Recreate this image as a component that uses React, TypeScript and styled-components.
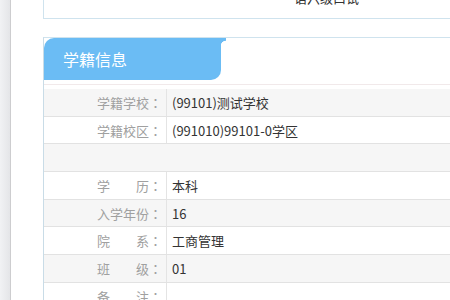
import React from 'react';
import styled, { createGlobalStyle } from 'styled-components';

const GlobalStyle = createGlobalStyle`
    html, body {
        margin: 0;
        padding: 0;
        background: #fff;
        overflow: hidden;
    }
    body {
        font-family: "Noto Sans CJK SC", "Noto Sans", sans-serif;
        font-size: 13px;
    }
`;

type Row = { label: string; value?: string; blank?: boolean };

const rows: Row[] = [
    { label: '学籍学校', value: '(99101)测试学校' },
    { label: '学籍校区', value: '(991010)99101-0学区' },
    { label: '', blank: true },
    { label: '学　　历', value: '本科' },
    { label: '入学年份', value: '16' },
    { label: '院　　系', value: '工商管理' },
    { label: '班　　级', value: '01' },
    { label: '备　　注', value: '' },
];

const App: React.FC = () => {
    return (
        <>
            <GlobalStyle />
            <Page>
                <SideStrip />
                <Main>
                    <TopPanel>
                        <TopTitle>语六级口试</TopTitle>
                    </TopPanel>
                    <InfoPanel>
                        <TabRow>
                            <Tab>学籍信息</Tab>
                        </TabRow>
                        <Body>
                            {rows.map((row, i) => (
                                <InfoRow key={i} striped={i % 2 === 0}>
                                    {row.blank ? (
                                        <BlankCell />
                                    ) : (
                                        <>
                                            <LabelCell>
                                                {row.label}
                                                <Colon>：</Colon>
                                            </LabelCell>
                                            <ValueCell>{row.value}</ValueCell>
                                        </>
                                    )}
                                </InfoRow>
                            ))}
                        </Body>
                    </InfoPanel>
                </Main>
            </Page>
        </>
    );
};

const TAB_BLUE = '#6bbcf4';
const PANEL_BORDER = '#cfe3ee';

const Page = styled.div`
    display: flex;
    width: 450px;
    height: 300px;
    overflow: hidden;
`;

const SideStrip = styled.div`
    flex: 0 0 10px;
    background: linear-gradient(to right, #f1f2f4, #e4e5e8);
    border-right: 1px solid #cdcdcf;
`;

const Main = styled.div`
    flex: 0 0 auto;
    width: 566px;
    padding-left: 32px;
`;

const TopPanel = styled.div`
    display: flow-root;
    height: 18px;
    border-left: 1px solid ${PANEL_BORDER};
    border-bottom: 1px solid ${PANEL_BORDER};
    text-align: center;
`;

const TopTitle = styled.div`
    margin-top: -10px;
    line-height: 16px;
    font-size: 13px;
    color: #333;
`;

const InfoPanel = styled.div`
    margin-top: 18px;
    border-top: 1px solid ${PANEL_BORDER};
    border-left: 1px solid #c9dce7;
`;

const TabRow = styled.div`
    display: flex;
`;

const Tab = styled.div`
    position: relative;
    width: 158px;
    height: 42px;
    padding-left: 19px;
    background: ${TAB_BLUE};
    border-radius: 10px 0 10px 0;
    color: #fff;
    font-size: 16px;
    line-height: 42px;

    &::after {
        content: '';
        position: absolute;
        top: 0;
        right: -5px;
        width: 5px;
        height: 8px;
        background: radial-gradient(circle at 100% 100%, transparent 5px, ${TAB_BLUE} 5.6px);
    }
`;

const Body = styled.div`
    margin-top: 4px;
    border-top: 1px solid #f1e9ea;
    padding-top: 4px;
`;

const InfoRow = styled.div<{ striped: boolean }>`
    display: grid;
    grid-template-columns: 123px 1fr;
    box-sizing: border-box;
    height: 27.7px;
    border-bottom: 1px solid #e2e2e2;
    background: ${(props) => (props.striped ? '#f6f6f6' : '#fff')};
`;

const LabelCell = styled.div`
    display: flex;
    align-items: center;
    justify-content: flex-end;
    padding-right: 4px;
    border-right: 1px solid #e4e4e4;
    color: #a0a0a0;
    font-size: 13px;
`;

const Colon = styled.span`
    display: inline-block;
    width: 13px;
    text-align: center;
    font-family: "Noto Sans CJK JP", sans-serif;
`;

const ValueCell = styled.div`
    display: flex;
    align-items: center;
    padding-left: 5px;
    color: #333;
    font-size: 13px;
`;

const BlankCell = styled.div`
    grid-column: 1 / -1;
`;

export default App;
